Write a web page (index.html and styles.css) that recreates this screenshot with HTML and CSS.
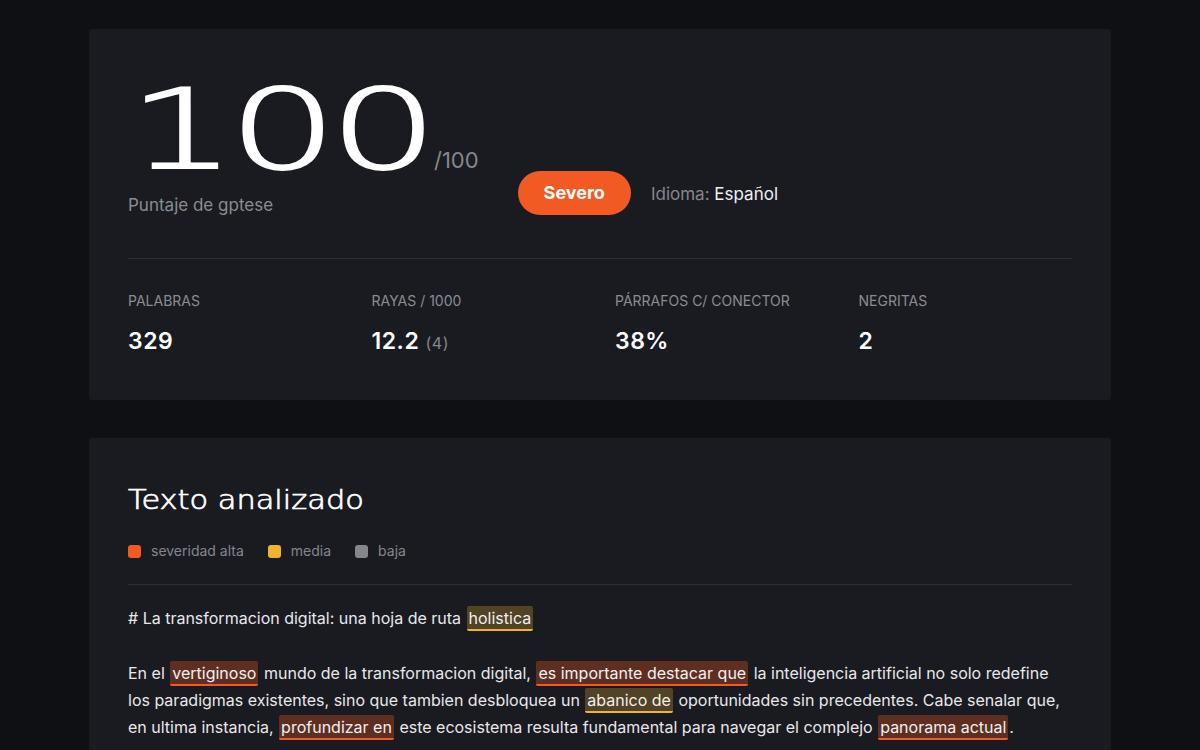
FILE: index.html
```html
<!DOCTYPE html>
<html lang="es">
<head>
    <meta charset="UTF-8">
    <meta name="viewport" content="width=device-width, initial-scale=1.0">
    <title>Detector de gptese</title>
    <link rel="stylesheet" href="styles.css">
</head>
<body>

    <div class="page">
        <!-- Puntaje -->
        <div class="card">
            <div class="score-row">
                <div class="score-block">
                    <div class="score"><span class="score-num">100</span><span class="score-max">/100</span></div>
                    <div class="score-label">Puntaje de gptese</div>
                </div>
                <span class="badge">Severo</span>
                <span class="lang">Idioma: <b>Español</b></span>
            </div>

            <div class="stats">
                <div class="stat">
                    <div class="stat-label">Palabras</div>
                    <div class="stat-value">329</div>
                </div>
                <div class="stat">
                    <div class="stat-label">Rayas / 1000</div>
                    <div class="stat-value">12.2 <small>(4)</small></div>
                </div>
                <div class="stat">
                    <div class="stat-label">Párrafos c/ conector</div>
                    <div class="stat-value">38%</div>
                </div>
                <div class="stat">
                    <div class="stat-label">Negritas</div>
                    <div class="stat-value">2</div>
                </div>
            </div>
        </div>

        <!-- Texto -->
        <div class="card">
            <h2>Texto analizado</h2>
            <div class="legend">
                <span><i class="dot high"></i>severidad alta</span>
                <span><i class="dot mid"></i>media</span>
                <span><i class="dot low"></i>baja</span>
            </div>

            <div class="text">
                <p># La transformacion digital: una hoja de ruta <mark class="mid">holistica</mark></p>
                <p>En el <mark class="high">vertiginoso</mark> mundo de la transformacion digital, <mark class="high">es importante destacar que</mark> la inteligencia artificial no solo redefine los paradigmas existentes, sino que tambien desbloquea un <mark class="mid">abanico de</mark> oportunidades sin precedentes. Cabe senalar que, en ultima instancia, <mark class="high">profundizar en</mark> este ecosistema resulta fundamental para navegar el complejo <mark class="high">panorama actual</mark>.</p>
                <p>Por otro lado, las organizaciones que apuestan por la innovacion logran potenciar sus capacidades y fomentar una cultura de mejora continua en todos los niveles.</p>
            </div>
        </div>
    </div>

</body>
</html>
```

FILE: styles.css
```css
body {
    margin: 0;
    background-color: #0f1014;
    color: #e8e8ea;
    font-family: Inter, "Noto Sans", Arial, sans-serif;
}
.page {
    max-width: 1022px;
    margin: 0 auto;
    padding-top: 29px;
}
.card {
    background-color: #1a1b21;
    border-radius: 3px;
    padding: 46px 39px 45px;
    margin-bottom: 38px;
}

/* puntaje */
.score-row {
    display: flex;
    align-items: flex-end;
}
.score-block {
    margin-right: 39px;
}
.score {
    white-space: nowrap;
}
.score-num {
    display: inline-block;
    font-family: "DejaVu Sans", sans-serif;
    font-weight: 200;
    font-size: 110px;
    line-height: 1;
    letter-spacing: -5px;
    color: #fff;
    -webkit-text-stroke: 2px #fff;
    transform: scaleX(1.55);
    transform-origin: left bottom;
    margin-right: 111px;
}
.score-max {
    font-size: 22px;
    color: #85868c;
}
.score-label {
    font-size: 17px;
    color: #8b8c92;
    margin-top: 10px;
}
.badge {
    background-color: #f15a22;
    color: #fff;
    font-weight: 700;
    font-size: 18px;
    padding: 11px 26px 12px;
    border-radius: 22px;
    margin-right: 20px;
}
.lang {
    font-size: 17px;
    color: #85868c;
    padding-bottom: 11px;
}
.lang b {
    font-weight: 400;
    color: #f0f0f2;
}

.stats {
    display: grid;
    grid-template-columns: repeat(4, 1fr);
    gap: 30px;
    border-top: 1px solid #2e2f36;
    margin-top: 43px;
    padding-top: 33px;
}
.stat-label {
    font-size: 14px;
    text-transform: uppercase;
    color: #8b8c92;
}
.stat-value {
    font-size: 23px;
    font-weight: 600;
    color: #fff;
    margin-top: 18px;
    letter-spacing: 0.5px;
}
.stat-value small {
    font-size: 16px;
    font-weight: 400;
    color: #85868c;
}

/* texto */
.card + .card {
    padding-top: 42px;
}
h2 {
    font-family: "DejaVu Sans", sans-serif;
    font-weight: 200;
    font-size: 26px;
    margin: 5px 0 0;
    color: #fff;
    -webkit-text-stroke: 0.7px #fff;
    transform: scaleX(1.17);
    transform-origin: left;
}
.legend {
    display: flex;
    gap: 24px;
    margin-top: 27px;
    padding-bottom: 25px;
    border-bottom: 1px solid #2e2f36;
    font-size: 14px;
    color: #85868c;
}
.dot {
    display: inline-block;
    width: 13px;
    height: 13px;
    border-radius: 3px;
    margin-right: 10px;
    vertical-align: -2px;
}
.dot.high { background-color: #f15a22; }
.dot.mid { background-color: #f0b42e; }
.dot.low { background-color: #85868c; }

.text {
    padding-top: 20px;
    font-size: 16px;
    line-height: 27px;
}
.text p {
    margin: 0 0 28px;
}
mark {
    color: #f0f0f2;
    padding: 2px 2px 1px;
    margin: 0 1px;
    border-radius: 2px;
}
mark.high {
    background-color: rgba(241, 90, 34, 0.32);
    border-bottom: 2px solid #f15a22;
}
mark.mid {
    background-color: rgba(240, 180, 46, 0.26);
    border-bottom: 2px solid #f0b42e;
}
```
